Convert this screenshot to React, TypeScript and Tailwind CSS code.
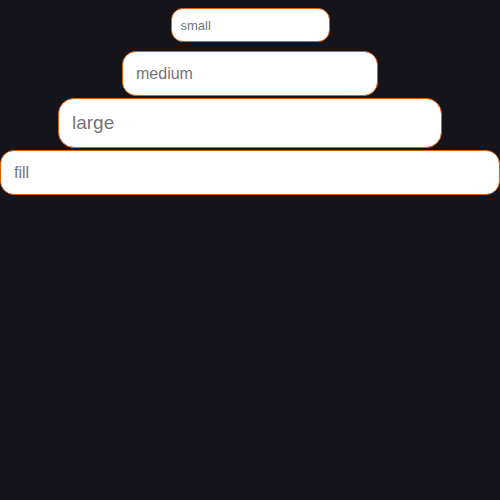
export default function App() {
  return (
    <div className="flex min-h-[500px] flex-col items-center bg-[#15141a] font-['Liberation_Sans',Arial,sans-serif]">
      <input
        placeholder="small"
        className="mt-2 h-[34px] w-[159px] rounded-xl border border-[#e0600c] bg-white px-[9px] text-[13px] text-gray-900 outline-none placeholder:text-[#757575]"
      />
      <input
        placeholder="medium"
        className="mt-[9px] h-[45px] w-[256px] rounded-[14px] border border-[#e0600c] bg-white px-[13px] text-base text-gray-900 outline-none placeholder:text-[#757575]"
      />
      <input
        placeholder="large"
        className="mt-[2px] h-[50px] w-[384px] rounded-2xl border border-[#e0600c] bg-white px-[13px] text-[19px] text-gray-900 outline-none placeholder:text-[#757575]"
      />
      <input
        placeholder="fill"
        className="mt-[2px] h-[45px] w-full rounded-[14px] border border-[#e0600c] bg-white px-[13px] text-base text-gray-900 outline-none placeholder:text-[#757575]"
      />
    </div>
  );
}
